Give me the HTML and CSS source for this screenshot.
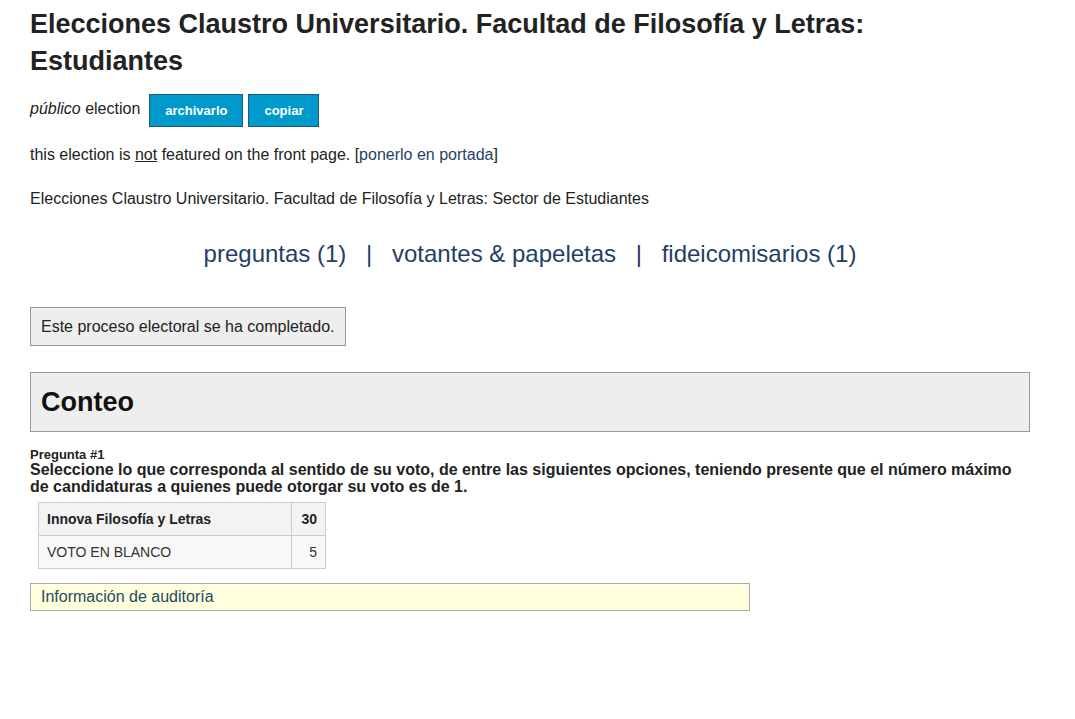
FILE: index.html
```html
<!DOCTYPE html>
<html lang="es">
<head>
  <meta charset="UTF-8" />
  <title>Elecciones Claustro Universitario</title>
  <link rel="stylesheet" href="styles.css">
</head>
<body>

<div id="content">
  <h1 class="title">Elecciones Claustro Universitario. Facultad de Filosofía y Letras: Estudiantes</h1>

  <!-- status + actions -->
  <div class="status-row">
    <span><em>público</em> election</span>
    <button class="btn">archivarlo</button>
    <button class="btn">copiar</button>
  </div>

  <p class="featured">this election is <u>not</u> featured on the front page. [<a href="#">ponerlo en portada</a>]</p>

  <p class="desc">Elecciones Claustro Universitario. Facultad de Filosofía y Letras: Sector de Estudiantes</p>

  <!-- navigation -->
  <div class="election-nav">
    <a href="#">preguntas (1)</a>
    <span class="sep">|</span>
    <a href="#">votantes &amp; papeletas</a>
    <span class="sep">|</span>
    <a href="#">fideicomisarios (1)</a>
  </div>

  <div class="done-box">Este proceso electoral se ha completado.</div>

  <div class="section-box">
    <h2>Conteo</h2>
  </div>

  <!-- results -->
  <div class="question">
    <div class="q-label">Pregunta #1</div>
    <div class="q-text">Seleccione lo que corresponda al sentido de su voto, de entre las siguientes opciones, teniendo presente que el número máximo de candidaturas a quienes puede otorgar su voto es de 1.</div>
    <table class="results">
      <tr class="winner">
        <td class="answer">Innova Filosofía y Letras</td>
        <td class="count">30</td>
      </tr>
      <tr>
        <td class="answer">VOTO EN BLANCO</td>
        <td class="count">5</td>
      </tr>
    </table>
  </div>

  <div class="audit-box"><a href="#">Información de auditoría</a></div>
</div>

</body>
</html>
```

FILE: styles.css
```css
body {
  font-family: "Liberation Sans", Arial, sans-serif;
  color: #222;
  background: #fff;
  margin: 0;
}
a {
  color: #1f3f66;
  text-decoration: none;
}
#content {
  width: 1000px;
  margin: 0 0 0 30px;
  padding-top: 6px;
}
.title {
  max-width: 900px;
  font-size: 27px;
  line-height: 37px;
  margin: 0 0 14px 0;
  color: #222;
}
.status-row {
  display: flex;
  align-items: center;
  font-size: 16px;
}
.status-row span {
  margin-right: 9px;
  margin-top: -4px;
}
.btn {
  background: #0099cc;
  color: #fff;
  border: 1px solid #1b5a78;
  font-family: "Liberation Sans", Arial, sans-serif;
  font-weight: bold;
  font-size: 13px;
  height: 33px;
  padding: 0 15px;
  margin-right: 5px;
}
.featured {
  font-size: 16px;
  margin: 19px 0 0 0;
}
.desc {
  font-size: 16px;
  margin: 26px 0 0 0;
}
.election-nav {
  text-align: center;
  font-size: 24px;
  margin-top: 32px;
  color: #1f3f66;
}
.election-nav .sep {
  margin: 0 13px;
}
.done-box {
  display: inline-block;
  margin-top: 39px;
  background: #eee;
  border: 1px solid #999;
  padding: 10px 10px 9px 10px;
  font-size: 16px;
  line-height: 18px;
}
.section-box {
  margin-top: 26px;
  background: #eee;
  border: 1px solid #999;
  height: 58px;
  display: flex;
  align-items: center;
  padding-left: 10px;
}
.section-box h2 {
  margin: 0;
  font-size: 27px;
  color: #111;
}
.question {
  margin-top: 16px;
}
.q-label {
  font-size: 13px;
  font-weight: bold;
  line-height: 13px;
}
.q-text {
  font-size: 16px;
  font-weight: bold;
  line-height: 17px;
}
.results {
  margin: 7px 0 0 8px;
  border-collapse: collapse;
  font-size: 14px;
  color: #333;
}
.results td {
  border: 1px solid #ccc;
  height: 32px;
  padding: 0 8px;
  background: #f8f8f8;
}
.results .winner td {
  font-weight: bold;
  background: #f3f3f3;
  color: #222;
}
.results .answer {
  width: 236px;
}
.results .count {
  text-align: right;
  width: 17px;
}
.audit-box {
  width: 698px;
  margin-top: 14px;
  background: #ffffdd;
  border: 1px solid #aaa;
  padding: 4px 10px;
  font-size: 16px;
  line-height: 18px;
}
.audit-box a {
  color: #1f4a5f;
}
```
